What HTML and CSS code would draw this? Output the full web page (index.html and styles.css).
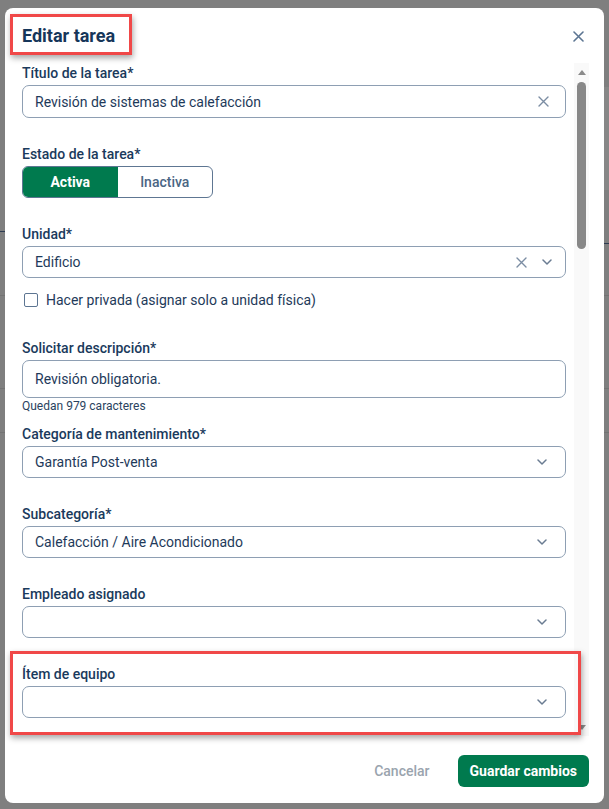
FILE: index.html
```html
<!DOCTYPE html>
<html lang="es">
<head>
<meta charset="utf-8">
<title>Editar tarea</title>
<link rel="stylesheet" href="styles.css">
</head>
<body>
<div class="modal">
  <header class="modal-header">
    <h2 class="modal-title">Editar tarea</h2>
    <button class="close-btn" aria-label="Cerrar">
      <svg width="11" height="11" viewBox="0 0 11 11"><path d="M1 1l9 9M10 1l-9 9" stroke="#5c7592" stroke-width="1.6" stroke-linecap="round" fill="none"/></svg>
    </button>
  </header>
  <div class="modal-body">
    <div class="form">
      <div class="field">
        <label class="label">Título de la tarea*</label>
        <div class="input input-text">
          <span class="value">Revisión de sistemas de calefacción</span>
          <svg class="icon-clear" width="11" height="11" viewBox="0 0 11 11"><path d="M1 1l9 9M10 1l-9 9" stroke="#7b8da3" stroke-width="1.4" stroke-linecap="round" fill="none"/></svg>
        </div>
      </div>

      <div class="field">
        <label class="label">Estado de la tarea*</label>
        <div class="toggle">
          <span class="seg seg-active">Activa</span>
          <span class="seg">Inactiva</span>
        </div>
      </div>

      <div class="field">
        <label class="label">Unidad*</label>
        <div class="input select select-clearable">
          <span class="value">Edificio</span>
          <svg class="icon-clear" width="11" height="11" viewBox="0 0 11 11"><path d="M1 1l9 9M10 1l-9 9" stroke="#7b8da3" stroke-width="1.4" stroke-linecap="round" fill="none"/></svg>
          <svg class="chev" width="10" height="6" viewBox="0 0 10 6"><path d="M1 1l4 4 4-4" fill="none" stroke="#6a7c92" stroke-width="1.5" stroke-linecap="round" stroke-linejoin="round"/></svg>
        </div>
        <div class="check-row">
          <span class="checkbox"></span>
          <span class="check-label">Hacer privada (asignar solo a unidad física)</span>
        </div>
      </div>

      <div class="field field-after-check">
        <label class="label">Solicitar descripción*</label>
        <div class="input textarea"><span class="value">Revisión obligatoria.</span></div>
        <div class="helper">Quedan 979 caracteres</div>
      </div>

      <div class="field field-after-helper">
        <label class="label">Categoría de mantenimiento*</label>
        <div class="input select">
          <span class="value">Garantía Post-venta</span>
          <svg class="chev" width="10" height="6" viewBox="0 0 10 6"><path d="M1 1l4 4 4-4" fill="none" stroke="#6a7c92" stroke-width="1.5" stroke-linecap="round" stroke-linejoin="round"/></svg>
        </div>
      </div>

      <div class="field">
        <label class="label">Subcategoría*</label>
        <div class="input select">
          <span class="value">Calefacción / Aire Acondicionado</span>
          <svg class="chev" width="10" height="6" viewBox="0 0 10 6"><path d="M1 1l4 4 4-4" fill="none" stroke="#6a7c92" stroke-width="1.5" stroke-linecap="round" stroke-linejoin="round"/></svg>
        </div>
      </div>

      <div class="field">
        <label class="label">Empleado asignado</label>
        <div class="input select">
          <span class="value"></span>
          <svg class="chev" width="10" height="6" viewBox="0 0 10 6"><path d="M1 1l4 4 4-4" fill="none" stroke="#6a7c92" stroke-width="1.5" stroke-linecap="round" stroke-linejoin="round"/></svg>
        </div>
      </div>

      <div class="field">
        <label class="label">Ítem de equipo</label>
        <div class="input select">
          <span class="value"></span>
          <svg class="chev" width="10" height="6" viewBox="0 0 10 6"><path d="M1 1l4 4 4-4" fill="none" stroke="#6a7c92" stroke-width="1.5" stroke-linecap="round" stroke-linejoin="round"/></svg>
        </div>
      </div>
    </div>
    <div class="scrollbar">
      <div class="sb-btn"><span class="tri-up"></span></div>
      <div class="sb-thumb"></div>
      <div class="sb-space"></div>
      <div class="sb-btn"><span class="tri-down"></span></div>
    </div>
  </div>
  <footer class="modal-footer">
    <button class="btn-cancel">Cancelar</button>
    <button class="btn-save">Guardar cambios</button>
  </footer>
  <div class="annot annot-title"></div>
  <div class="annot annot-item"></div>
</div>
</body>
</html>
```

FILE: styles.css
```css
* { box-sizing: border-box; }

html, body {
  margin: 0;
  padding: 0;
}

body {
  width: 609px;
  height: 809px;
  overflow: hidden;
  font-family: Roboto, "Noto Sans", "Liberation Sans", sans-serif;
  background-color: #7f7f7f;
  background-image:
    linear-gradient(#878787, #878787),
    linear-gradient(#2d3c52, #2d3c52),
    linear-gradient(#2d3c52, #2d3c52),
    linear-gradient(#737373, #737373),
    linear-gradient(#737373, #737373),
    linear-gradient(#737373, #737373);
  background-size:
    5px 103px,
    5px 1px,
    5px 1px,
    609px 1px,
    609px 1px,
    609px 1px;
  background-position:
    604px 87px,
    0 231px,
    604px 243px,
    0 295px,
    0 388px,
    0 432px;
  background-repeat: no-repeat;
}

.modal {
  position: relative;
  margin: 8px 0 0 5px;
  width: 599px;
  height: 795px;
  background: #ffffff;
  border-radius: 8px;
  display: flex;
  flex-direction: column;
}

.modal-header {
  display: flex;
  align-items: center;
  justify-content: space-between;
  padding: 16px 16px 14px 17px;
}

.modal-title {
  margin: 0;
  font-size: 18px;
  line-height: 24px;
  font-weight: 700;
  color: #16365a;
}

.close-btn {
  width: 20px;
  height: 20px;
  border: 0;
  padding: 0;
  background: none;
  display: flex;
  align-items: center;
  justify-content: center;
}

.modal-body {
  display: flex;
  height: 674px;
  flex: none;
  padding-right: 15px;
}

.form {
  flex: 1;
  overflow: hidden;
  padding: 1px 8px 0 17px;
}

.field { margin-top: 26px; }
.field:first-child { margin-top: 0; }
.field-after-check { margin-top: 28px; }
.field-after-helper { margin-top: 10px; }

.label {
  display: block;
  font-size: 14px;
  line-height: 20px;
  font-weight: 500;
  color: #1a3a5c;
  margin-bottom: 2px;
}

.input {
  display: flex;
  align-items: center;
  width: 544px;
  height: 32px;
  border: 1px solid #8e9fb3;
  border-radius: 7px;
  padding: 0 18px 0 12px;
  font-size: 14px;
  line-height: 20px;
  color: #1e3a5a;
  background: #fff;
}

.input .value {
  flex: 1;
  white-space: nowrap;
}

.input-text {
  height: 33px;
  padding-right: 16px;
}

.select-clearable {
  padding-right: 13px;
}

.select-clearable .icon-clear {
  margin-right: 15px;
}

.textarea {
  height: 38px;
  align-items: flex-start;
  padding-top: 8px;
}

.helper {
  font-size: 12px;
  line-height: 16px;
  color: #2a4360;
}

.toggle {
  display: flex;
  width: 191px;
  height: 32px;
  border: 1px solid #5e7692;
  border-radius: 6px;
  overflow: hidden;
}

.seg {
  flex: 1;
  display: flex;
  align-items: center;
  justify-content: center;
  font-size: 14px;
  font-weight: 500;
  color: #4a6684;
}

.seg-active {
  background: #007a4e;
  color: #ffffff;
  font-weight: 700;
}

.check-row {
  display: flex;
  align-items: center;
  margin-top: 12px;
  height: 20px;
}

.checkbox {
  width: 14px;
  height: 14px;
  margin-left: 2px;
  border: 1.5px solid #5d7592;
  border-radius: 2px;
}

.check-label {
  margin-left: 8px;
  font-size: 14px;
  line-height: 20px;
  color: #1e3a5a;
}

.scrollbar {
  width: 15px;
  margin-top: 1px;
  background: #f9f9f9;
  display: flex;
  flex-direction: column;
  align-items: center;
}

.sb-btn {
  height: 18px;
  width: 15px;
  display: flex;
  align-items: center;
  justify-content: center;
}

.tri-up {
  width: 0;
  height: 0;
  border-left: 4px solid transparent;
  border-right: 4px solid transparent;
  border-bottom: 5px solid #8a8a8a;
}

.tri-down {
  width: 0;
  height: 0;
  border-left: 4px solid transparent;
  border-right: 4px solid transparent;
  border-top: 5px solid #8a8a8a;
}

.sb-thumb {
  margin-top: 1px;
  width: 9px;
  height: 167px;
  border-radius: 5px;
  background: #888888;
}

.sb-space { flex: 1; }

.modal-footer {
  display: flex;
  justify-content: flex-end;
  align-items: center;
  gap: 16px;
  padding: 19px 15px 16px;
}

.btn-cancel {
  height: 32px;
  padding: 0 12px;
  border: 0;
  background: none;
  font-family: inherit;
  font-size: 14px;
  font-weight: 500;
  color: #9aa4ae;
}

.btn-save {
  height: 32px;
  padding: 0 12px;
  border: 0;
  border-radius: 6px;
  background: #007a4e;
  font-family: inherit;
  font-size: 14px;
  font-weight: 700;
  color: #ffffff;
}

.annot {
  position: absolute;
  border: 3px solid #f04848;
  box-shadow: 1px 3px 6px rgba(0, 0, 0, 0.35);
  pointer-events: none;
}

.annot-title {
  left: 5px;
  top: 6px;
  width: 122px;
  height: 41px;
}

.annot-item {
  left: 5px;
  top: 643px;
  width: 571px;
  height: 84px;
}
```
